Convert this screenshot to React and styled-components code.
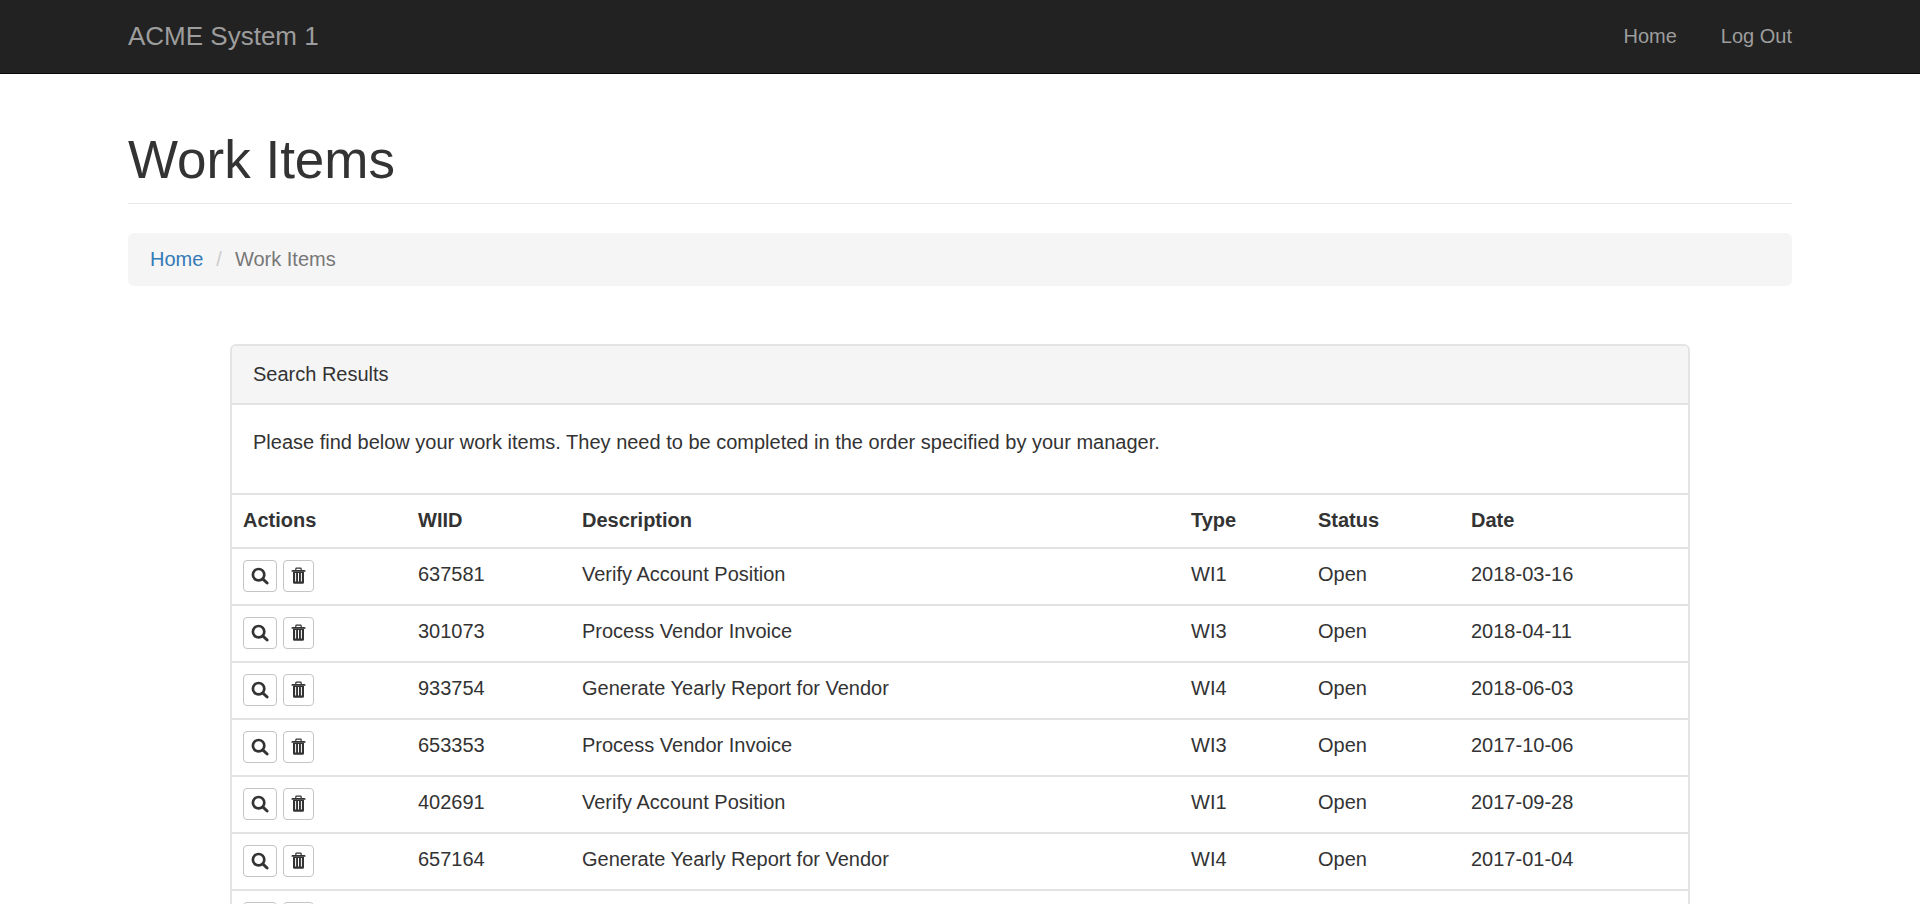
import React from "react";
import styled, { createGlobalStyle } from "styled-components";

const GlobalStyle = createGlobalStyle`
  *, *::before, *::after { box-sizing: border-box; }
  body {
    margin: 0;
    background: #fff;
    color: #333;
    font-family: "Liberation Sans", Arial, Helvetica, sans-serif;
    font-size: 20px;
    line-height: 28px;
  }
`;

const Navbar = styled.nav`
  background: #222;
  border-bottom: 1px solid #080808;
`;

const Container = styled.div`
  max-width: 1708px;
  margin: 0 auto;
  padding: 0 22px;
`;

const NavContent = styled(Container)`
  display: flex;
  align-items: center;
  justify-content: space-between;
  min-height: 73px;
  padding-bottom: 2px;
`;

const NavLink = styled.a`
  color: #9d9d9d;
  text-decoration: none;
  &:hover { color: #fff; }
`;

const Brand = styled(NavLink)`
  font-size: 26px;
`;

const NavLinks = styled.div`
  display: flex;
  gap: 44px;
`;

const PageHeader = styled.header`
  margin: 56px 0 29px;
  padding-bottom: 14px;
  border-bottom: 1px solid #e8e8e8;
`;

const Title = styled.h1`
  margin: 0;
  font-size: 53px;
  font-weight: normal;
  line-height: 59px;
`;

const Breadcrumb = styled.ol`
  display: flex;
  list-style: none;
  margin: 0 0 58px;
  padding: 12px 22px 13px;
  border-radius: 6px;
  background: #f5f5f5;
`;

const Crumb = styled.li`
  color: #777;
  & + &::before {
    content: "/";
    padding: 0 13px;
    color: #ccc;
  }
`;

const CrumbLink = styled.a`
  color: #337ab7;
  text-decoration: none;
`;

const Panel = styled.section`
  max-width: 1460px;
  margin: 0 auto 30px;
  border: 2px solid #e4e4e4;
  border-radius: 6px;
  overflow: hidden;
`;

const PanelHeading = styled.h2`
  margin: 0;
  padding: 14px 21px 15px;
  border-bottom: 2px solid #e2e2e2;
  background: #f5f5f5;
  font-size: 20px;
  font-weight: normal;
`;

const PanelBody = styled.p`
  margin: 0;
  padding: 23px 21px 37px;
`;

const Table = styled.table`
  width: 100%;
  table-layout: fixed;
  border-collapse: collapse;
`;

const Col = styled.col`
  width: ${({ $width }) => $width};
`;

const HeadCell = styled.th`
  height: 54px;
  padding: 11px;
  border-top: 2px solid #e2e2e2;
  text-align: left;
  vertical-align: top;
`;

const Cell = styled.td`
  height: 57px;
  padding: 11px;
  border-top: 2px solid #e2e2e2;
  vertical-align: top;
`;

const Actions = styled.div`
  display: flex;
  gap: 6px;
`;

const ActionButton = styled.button`
  display: flex;
  align-items: center;
  justify-content: center;
  height: 32px;
  padding: 0 7px;
  border: 1px solid #c4c4c4;
  border-radius: 4px;
  background: #fff;
  color: #333;
  cursor: pointer;
`;

const SearchIcon = () => (
  <svg width="18" height="18" viewBox="0 0 18 18" aria-hidden="true">
    <circle cx="7.6" cy="7.7" r="5.7" fill="none" stroke="currentColor" strokeWidth="2.7" />
    <path d="M12 12.1 L16.1 16" stroke="currentColor" strokeWidth="2.9" strokeLinecap="round" />
  </svg>
);

const TrashIcon = () => (
  <svg width="15" height="18" viewBox="0 0 15 18" aria-hidden="true">
    <path d="M4.8 3.2 V2 Q4.8 1.2 5.6 1.2 H9.4 Q10.2 1.2 10.2 2 V3.2" fill="none" stroke="currentColor" strokeWidth="1.2" />
    <path d="M0.5 4.1 Q0.5 3 1.6 3 H13.4 Q14.5 3 14.5 4.1 V4.7 H0.5 Z" fill="currentColor" />
    <path
      fillRule="evenodd"
      d="M2 4.7 H13 V15.4 Q13 16.8 11.6 16.8 H3.4 Q2 16.8 2 15.4 Z M4.1 6 V14.4 H5.1 V6 Z M7 6 V14.4 H8 V6 Z M9.9 6 V14.4 H10.9 V6 Z"
      fill="currentColor"
    />
  </svg>
);

const columns = [
  { label: "Actions", width: "175px" },
  { label: "WIID", width: "164px" },
  { label: "Description", width: "auto" },
  { label: "Type", width: "127px" },
  { label: "Status", width: "153px" },
  { label: "Date", width: "228px" },
];

const items = [
  ["637581", "Verify Account Position", "WI1", "Open", "2018-03-16"],
  ["301073", "Process Vendor Invoice", "WI3", "Open", "2018-04-11"],
  ["933754", "Generate Yearly Report for Vendor", "WI4", "Open", "2018-06-03"],
  ["653353", "Process Vendor Invoice", "WI3", "Open", "2017-10-06"],
  ["402691", "Verify Account Position", "WI1", "Open", "2017-09-28"],
  ["657164", "Generate Yearly Report for Vendor", "WI4", "Open", "2017-01-04"],
  ["", "", "", "", ""],
];

export default function App() {
  return (
    <>
      <GlobalStyle />
      <Navbar>
        <NavContent>
          <Brand href="#">ACME System 1</Brand>
          <NavLinks>
            <NavLink href="#">Home</NavLink>
            <NavLink href="#">Log Out</NavLink>
          </NavLinks>
        </NavContent>
      </Navbar>
      <Container as="main">
        <PageHeader>
          <Title>Work Items</Title>
        </PageHeader>
        <Breadcrumb>
          <Crumb><CrumbLink href="#">Home</CrumbLink></Crumb>
          <Crumb>Work Items</Crumb>
        </Breadcrumb>
        <Panel>
          <PanelHeading>Search Results</PanelHeading>
          <PanelBody>
            Please find below your work items. They need to be completed in the order specified by your manager.
          </PanelBody>
          <Table>
            <colgroup>
              {columns.map((c) => <Col key={c.label} $width={c.width} />)}
            </colgroup>
            <thead>
              <tr>{columns.map((c) => <HeadCell key={c.label} scope="col">{c.label}</HeadCell>)}</tr>
            </thead>
            <tbody>
              {items.map((item, i) => (
                <tr key={i}>
                  <Cell>
                    <Actions>
                      <ActionButton type="button" aria-label="View work item"><SearchIcon /></ActionButton>
                      <ActionButton type="button" aria-label="Delete work item"><TrashIcon /></ActionButton>
                    </Actions>
                  </Cell>
                  {item.map((value, j) => <Cell key={j}>{value}</Cell>)}
                </tr>
              ))}
            </tbody>
          </Table>
        </Panel>
      </Container>
    </>
  );
}
